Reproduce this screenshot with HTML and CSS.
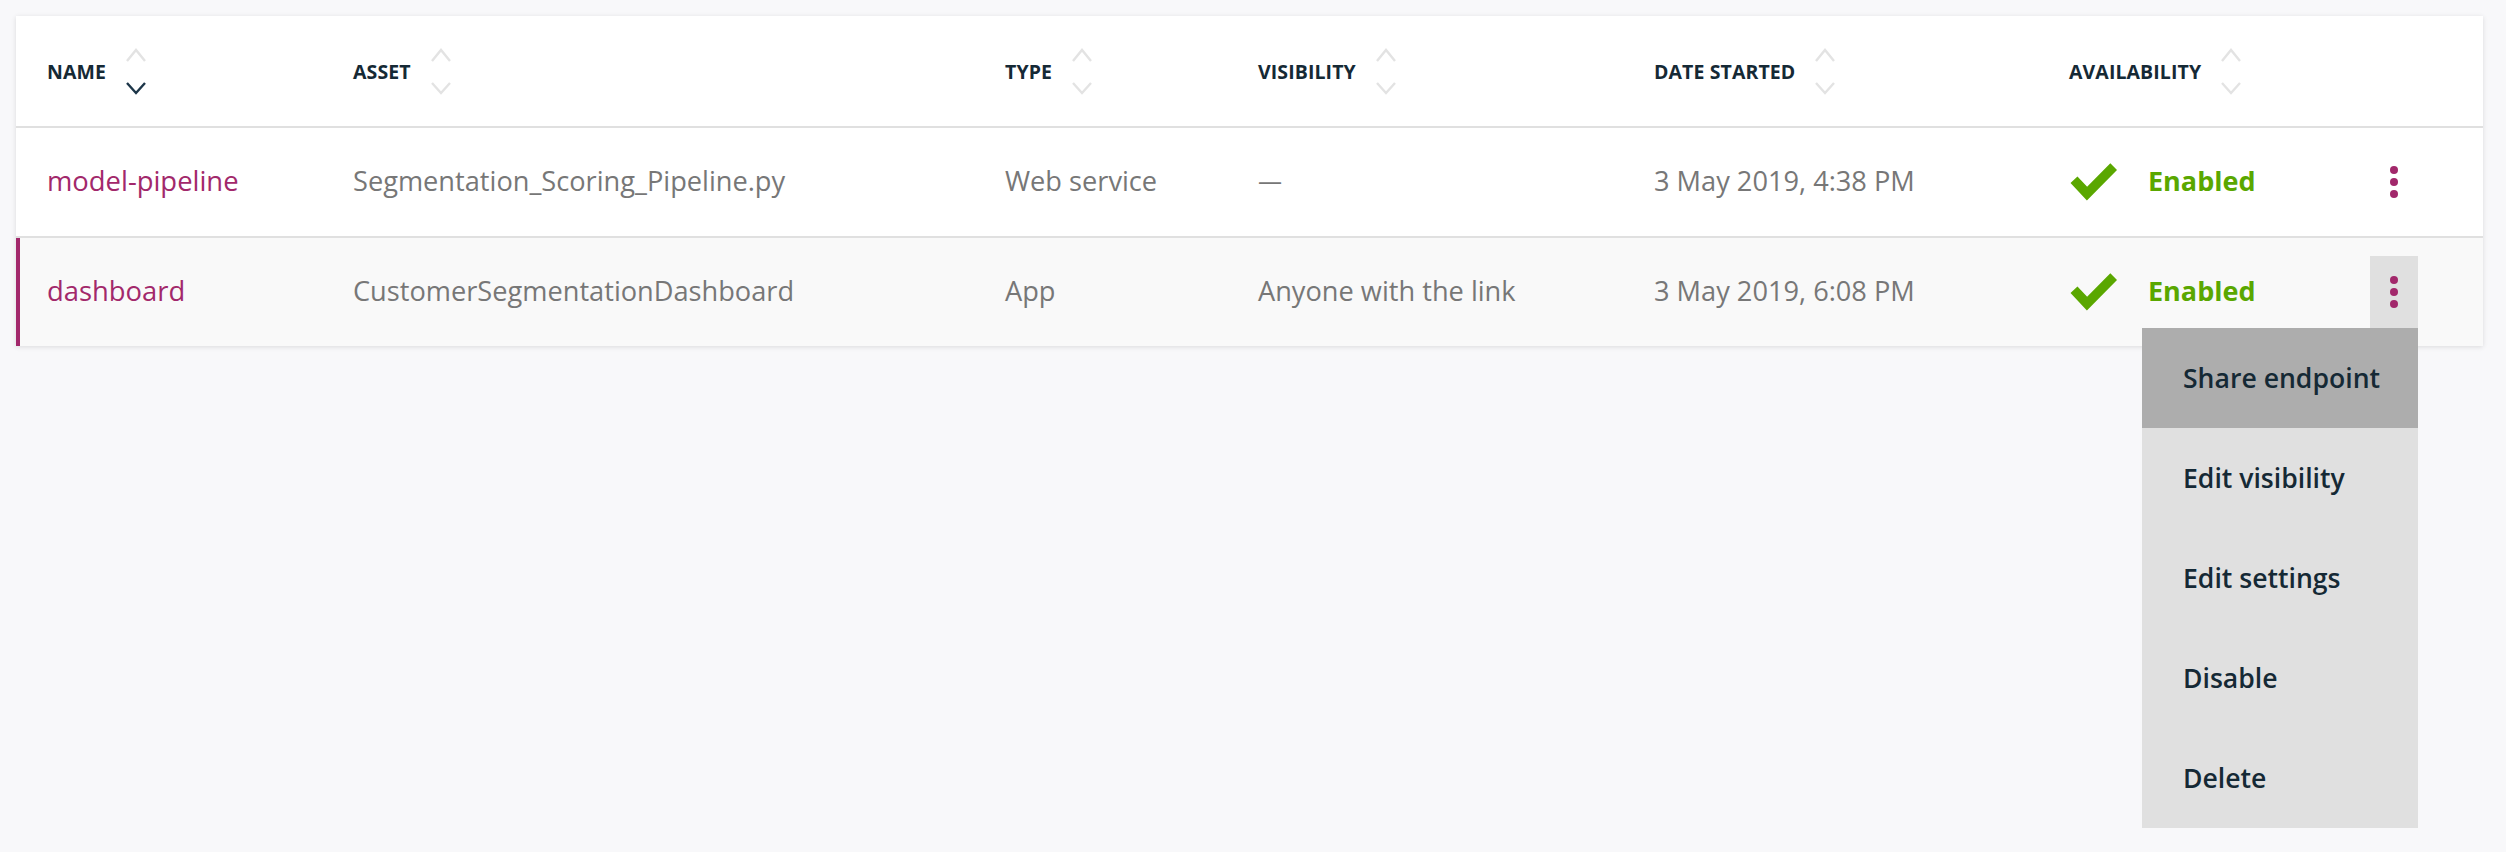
FILE: index.html
```html
<!DOCTYPE html>
<html lang="en">
<head>
<meta charset="utf-8">
<title>Deployments</title>
<link rel="stylesheet" href="styles.css">
</head>
<body>
<div class="card">
  <div class="row head">
    <div class="th">NAME<svg class="sort active-down" viewBox="0 0 20 47" width="20" height="47"><polyline class="up" points="1,13 10,2 19,13"/><polyline class="down" points="1,35 10,45 19,35"/></svg></div>
    <div class="th">ASSET<svg class="sort" viewBox="0 0 20 47" width="20" height="47"><polyline class="up" points="1,13 10,2 19,13"/><polyline class="down" points="1,35 10,45 19,35"/></svg></div>
    <div class="th">TYPE<svg class="sort" viewBox="0 0 20 47" width="20" height="47"><polyline class="up" points="1,13 10,2 19,13"/><polyline class="down" points="1,35 10,45 19,35"/></svg></div>
    <div class="th">VISIBILITY<svg class="sort" viewBox="0 0 20 47" width="20" height="47"><polyline class="up" points="1,13 10,2 19,13"/><polyline class="down" points="1,35 10,45 19,35"/></svg></div>
    <div class="th">DATE STARTED<svg class="sort" viewBox="0 0 20 47" width="20" height="47"><polyline class="up" points="1,13 10,2 19,13"/><polyline class="down" points="1,35 10,45 19,35"/></svg></div>
    <div class="th">AVAILABILITY<svg class="sort" viewBox="0 0 20 47" width="20" height="47"><polyline class="up" points="1,13 10,2 19,13"/><polyline class="down" points="1,35 10,45 19,35"/></svg></div>
    <div></div>
  </div>
  <div class="row">
    <div class="name">model-pipeline</div>
    <div class="td">Segmentation_Scoring_Pipeline.py</div>
    <div class="td">Web service</div>
    <div class="td dash">—</div>
    <div class="td">3 May 2019, 4:38 PM</div>
    <div class="status"><svg class="check" viewBox="0 0 48 38" width="48" height="38"><polyline points="5,16.7 18,30.6 44.7,3.7"/></svg><span>Enabled</span></div>
    <div class="kebab-cell"><div class="kebab"><svg viewBox="0 0 8 32" width="8" height="32"><circle cx="4" cy="4" r="4"/><circle cx="4" cy="16" r="4"/><circle cx="4" cy="28" r="4"/></svg></div></div>
  </div>
  <div class="row selected">
    <div class="name">dashboard</div>
    <div class="td">CustomerSegmentationDashboard</div>
    <div class="td">App</div>
    <div class="td">Anyone with the link</div>
    <div class="td">3 May 2019, 6:08 PM</div>
    <div class="status"><svg class="check" viewBox="0 0 48 38" width="48" height="38"><polyline points="5,16.7 18,30.6 44.7,3.7"/></svg><span>Enabled</span></div>
    <div class="kebab-cell">
      <div class="kebab open"><svg viewBox="0 0 8 32" width="8" height="32"><circle cx="4" cy="4" r="4"/><circle cx="4" cy="16" r="4"/><circle cx="4" cy="28" r="4"/></svg></div>
      <ul class="menu">
        <li class="hover">Share endpoint</li>
        <li>Edit visibility</li>
        <li>Edit settings</li>
        <li>Disable</li>
        <li>Delete</li>
      </ul>
    </div>
  </div>
</div>
</body>
</html>
```
FILE: styles.css
```css
html, body {
  margin: 0;
  padding: 0;
}
body {
  background: #f8f8fa;
  font-family: "Open Sans", "Noto Sans", sans-serif;
  width: 2506px;
  height: 852px;
  overflow: hidden;
}
.card {
  margin: 16px 0 0 16px;
  width: 2467px;
  background: #ffffff;
  box-shadow: 0 1px 5px rgba(0, 0, 0, 0.12);
}
.row {
  display: grid;
  grid-template-columns: 306px 652px 253px 396px 415px 301px 48px;
  padding: 0 65px 0 31px;
  height: 108px;
  align-items: center;
  border-bottom: 2px solid #e0e0e0;
  box-sizing: content-box;
}
.row:last-child {
  border-bottom: none;
}
.row.head {
  height: 110px;
}
.row.selected {
  background: #f9f9f9;
  box-shadow: inset 4px 0 0 #a2286b;
}
.th {
  display: flex;
  align-items: center;
  font-size: 19.5px;
  font-weight: 700;
  color: #152935;
  letter-spacing: 0.1px;
}
.sort {
  margin-left: 20px;
  fill: none;
  stroke-width: 2.4;
}
.sort .up, .sort .down {
  stroke: #e3e3e3;
}
.sort.active-down .down {
  stroke: #1d3649;
}
.td {
  font-size: 27.2px;
  color: #777777;
  white-space: nowrap;
  padding-bottom: 4px;
}
.td.dash {
  font-size: 24px;
}
.name {
  font-size: 27.4px;
  color: #a2286b;
  padding-bottom: 4px;
}
.status {
  display: flex;
  align-items: center;
}
.check {
  fill: none;
  stroke: #5aa700;
  stroke-width: 9.5;
  stroke-linejoin: miter;
  stroke-linecap: butt;
  margin-right: 31px;
}
.status span {
  font-size: 27px;
  font-weight: 700;
  color: #5aa700;
  padding-bottom: 4px;
}
.kebab-cell {
  position: relative;
  height: 72px;
}
.kebab {
  width: 48px;
  height: 72px;
  display: flex;
  align-items: center;
  justify-content: center;
  fill: #a2286b;
}
.kebab.open {
  background: #e0e0e0;
}
.menu {
  position: absolute;
  top: 72px;
  right: 0;
  width: 276px;
  margin: 0;
  padding: 0;
  list-style: none;
  background: #e0e0e0;
  z-index: 10;
}
.menu li {
  height: 100px;
  display: flex;
  align-items: center;
  padding-left: 41px;
  font-size: 26.6px;
  font-weight: 600;
  color: #152935;
}
.menu li.hover {
  background: #adadad;
}
```
